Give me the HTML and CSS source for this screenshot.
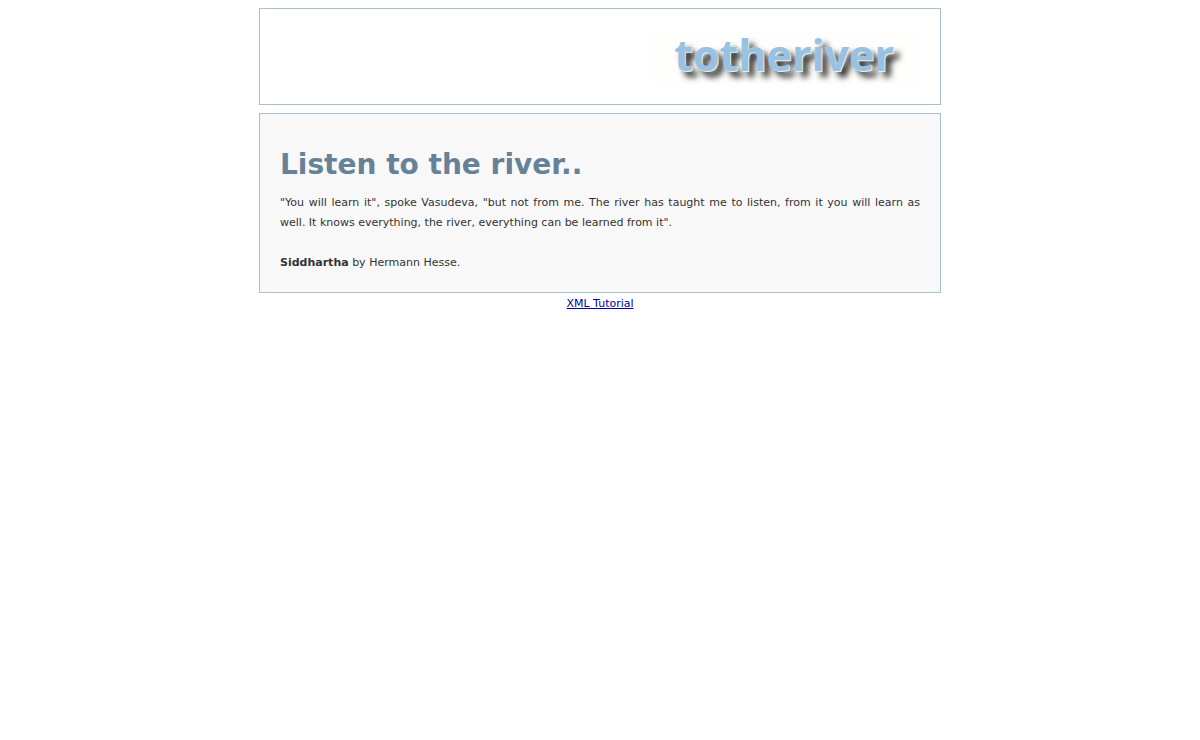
FILE: index.html
```html
<!DOCTYPE html>
<html lang="en">
<head>
    <meta charset="UTF-8">
    <meta name="viewport" content="width=device-width, initial-scale=1.0">
    <title>totheriver</title>
    <link rel="stylesheet" href="styles.css">
</head>
<body>
    <div class="header">
        <div class="logo">totheriver</div>
    </div>
    <div class="content">
        <h1>Listen to the river..</h1>
        <p>"You will learn it", spoke Vasudeva, "but not from me. The river has taught me to listen, from it you will learn as well. It knows everything, the river, everything can be learned from it".</p>
        <p class="source"><strong>Siddhartha</strong> by Hermann Hesse.</p>
    </div>
    <div class="footer">
        <a href="#">XML Tutorial</a>
    </div>
</body>
</html>
```
FILE: styles.css
```css
body {
    margin: 8px;
    background: #fff;
    color: #333;
    font-family: Verdana, "DejaVu Sans", sans-serif;
    font-size: 11px;
    line-height: 20px;
}
.header,
.content {
    box-sizing: border-box;
    max-width: 682px;
    margin: 0 auto 8px;
    padding: 20px;
    border: 1px solid #a7bfcf;
}
.header {
    display: flex;
    justify-content: flex-end;
}
.logo {
    padding: 0 26px 3px 23px;
    color: #98c1e2;
    background: #fefefc;
    font-family: "Trebuchet MS", "Open Sans", sans-serif;
    font-size: 43px;
    font-weight: bold;
    line-height: 52px;
    text-shadow: 1px 1px 0 #e4f0f8, 6px 6px 6px #222;
}
.content {
    margin-bottom: 0;
    padding: 21px 20px 19px;
    background: #f8f8f8;
}
.content h1 {
    margin: 10px 0 8px;
    color: #678197;
    font-size: 28px;
    line-height: 40px;
}
.content p {
    margin: 0;
    text-align: justify;
}
.content .source {
    margin-top: 20px;
}
.footer {
    padding-top: 1px;
    text-align: center;
}
.footer a {
    color: #0000a0;
}
```
